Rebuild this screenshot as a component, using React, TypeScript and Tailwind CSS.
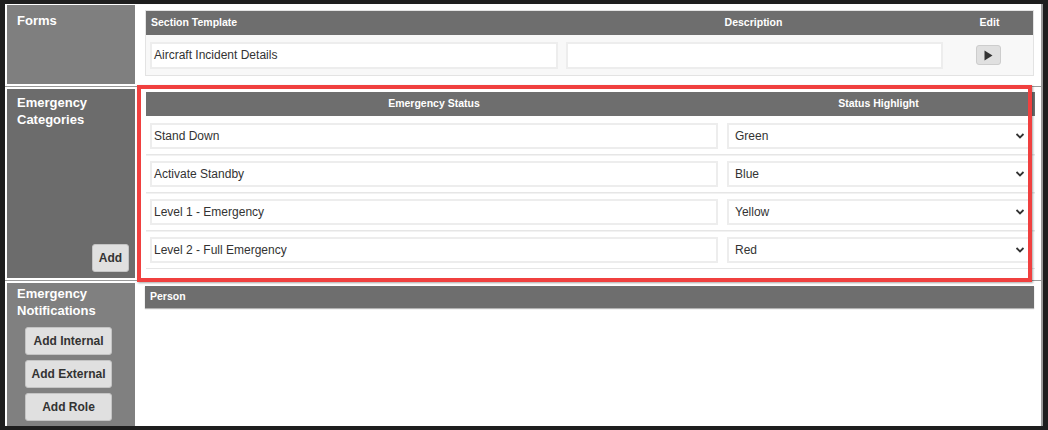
import type { ReactNode } from "react";

const font = "font-['Liberation_Sans',Arial,sans-serif]";

const categories = [
  { status: "Stand Down", highlight: "Green" },
  { status: "Activate Standby", highlight: "Blue" },
  { status: "Level 1 - Emergency", highlight: "Yellow" },
  { status: "Level 2 - Full Emergency", highlight: "Red" },
];

const SideButton = ({ children, className = "" }: { children: ReactNode; className?: string }) => (
  <button
    className={`h-[28px] rounded-[3px] border border-[#c4c4c4] bg-[#e0e0e0] text-[12px] font-bold text-[#333] ${className}`}
  >
    {children}
  </button>
);

const Chevron = () => (
  <svg width="10" height="7" viewBox="0 0 10 7" className="absolute right-[4px] top-1/2 -translate-y-1/2">
    <path d="M1.5 1.5 L5 5 L8.5 1.5" fill="none" stroke="#333" strokeWidth="1.8" />
  </svg>
);

const App = () => {
  return (
    <div className={`h-[430px] w-[1048px] bg-[#1e1e1e] pl-[5px] pt-[4px] pr-[5px] pb-[4px] ${font}`}>
      <div className="flex h-full flex-col border-r-2 border-[#9a9a9a] bg-white pt-[1px]">
        {/* Forms */}
        <div className="flex h-[79px]">
          <div className="ml-[2px] w-[128px] bg-[#7f7f7f] px-[10px] pt-[6px] text-[13px] font-bold text-white">
            Forms
          </div>
          <div className="flex-1 pl-[10px] pr-[7px] pt-[5px]">
            <div className="border border-[#e3e3e3] bg-[#f8f8f8]">
              <div className="flex h-[24px] items-center bg-[#6e6e6e] text-[10.5px] font-bold text-white">
                <div className="w-[415px] pl-[5px]">Section Template</div>
                <div className="w-[385px] text-center">Description</div>
                <div className="flex-1 text-center">Edit</div>
              </div>
              <div className="flex h-[40px] items-center">
                <div className="ml-[4px] flex h-[27px] w-[408px] items-center border-2 border-[#ededed] bg-white px-[2px] text-[12px] text-[#333]">
                  Aircraft Incident Details
                </div>
                <div className="ml-[8px] h-[27px] w-[377px] border-2 border-[#ededed] bg-white" />
                <div className="flex flex-1 justify-center">
                  <button className="flex h-[20px] w-[25px] items-center justify-center rounded-[3px] border border-[#cdcdcd] bg-[#e0e0e0]">
                    <svg width="10" height="11" viewBox="0 0 10 11">
                      <path d="M1.5 0.5 L9.5 5.5 L1.5 10.5 Z" fill="#333" />
                    </svg>
                  </button>
                </div>
              </div>
            </div>
          </div>
        </div>

        {/* Emergency Categories */}
        <div className="mt-[2px] flex h-[192px] border-t border-[#9a9a9a]">
          <div className="ml-[2px] flex w-[128px] flex-col justify-between border-t-2 border-white bg-[#6c6c6c] px-[10px] pb-[6px] pt-[5px]">
            <div className="text-[13px] font-bold leading-[17px] text-white">
              Emergency
              <br />
              Categories
            </div>
            <div className="flex justify-end">
              <SideButton className="-mr-[4px] w-[37px]">Add</SideButton>
            </div>
          </div>
          <div className="relative flex-1 border-l border-white pl-[10px] pr-[6px] pt-[5px]">
            <div className="bg-white">
              <div className="flex h-[24px] items-center bg-[#6e6e6e] text-[10.5px] font-bold text-white">
                <div className="w-[576px] text-center">Emergency Status</div>
                <div className="flex-1 text-center">Status Highlight</div>
              </div>
              {categories.map((c, i) => (
                <div
                  key={c.status}
                  className={`flex gap-[9px] border-b border-[#e6e6e6] pl-[4px] pr-[4px] pb-[5px] ${i === 0 ? "pt-[7px]" : "border-t border-t-[#f2f2f2] pt-[5px]"}`}
                >
                  <div className="flex h-[26px] w-[568px] items-center border-2 border-[#ededed] bg-white px-[2px] text-[12px] text-[#333]">
                    {c.status}
                  </div>
                  <div className="relative flex h-[26px] flex-1 items-center border-2 border-[#ededed] bg-white px-[6px] text-[12px] text-[#333]">
                    {c.highlight}
                    <Chevron />
                  </div>
                </div>
              ))}
            </div>
            {/* highlight annotation */}
            <div className="pointer-events-none absolute left-[1px] top-[-2px] h-[197px] w-[895px] border-[4px] border-[#f0403f] shadow-[1px_1px_2px_rgba(0,0,0,0.35)]" />
          </div>
        </div>

        {/* Emergency Notifications */}
        <div className="mt-[2px] flex flex-1 border-t border-[#9a9a9a]">
          <div className="ml-[2px] flex w-[128px] flex-col border-t-2 border-white bg-[#808080] pt-[2px]">
            <div className="px-[10px] text-[13px] font-bold leading-[17px] text-white">
              Emergency
              <br />
              Notifications
            </div>
            <div className="mt-[8px] flex flex-col gap-[5px] pl-[18px]">
              <SideButton className="w-[87px]">Add Internal</SideButton>
              <SideButton className="w-[87px]">Add External</SideButton>
              <SideButton className="w-[87px]">Add Role</SideButton>
            </div>
          </div>
          <div className="flex-1 pl-[10px] pr-[7px] pt-[5px]">
            <div className="flex h-[22px] items-center bg-[#6e6e6e] pl-[5px] text-[10.5px] font-bold text-white shadow-[0_1px_1px_rgba(0,0,0,0.3)]">
              Person
            </div>
          </div>
        </div>
      </div>
    </div>
  );
};

export default App;
